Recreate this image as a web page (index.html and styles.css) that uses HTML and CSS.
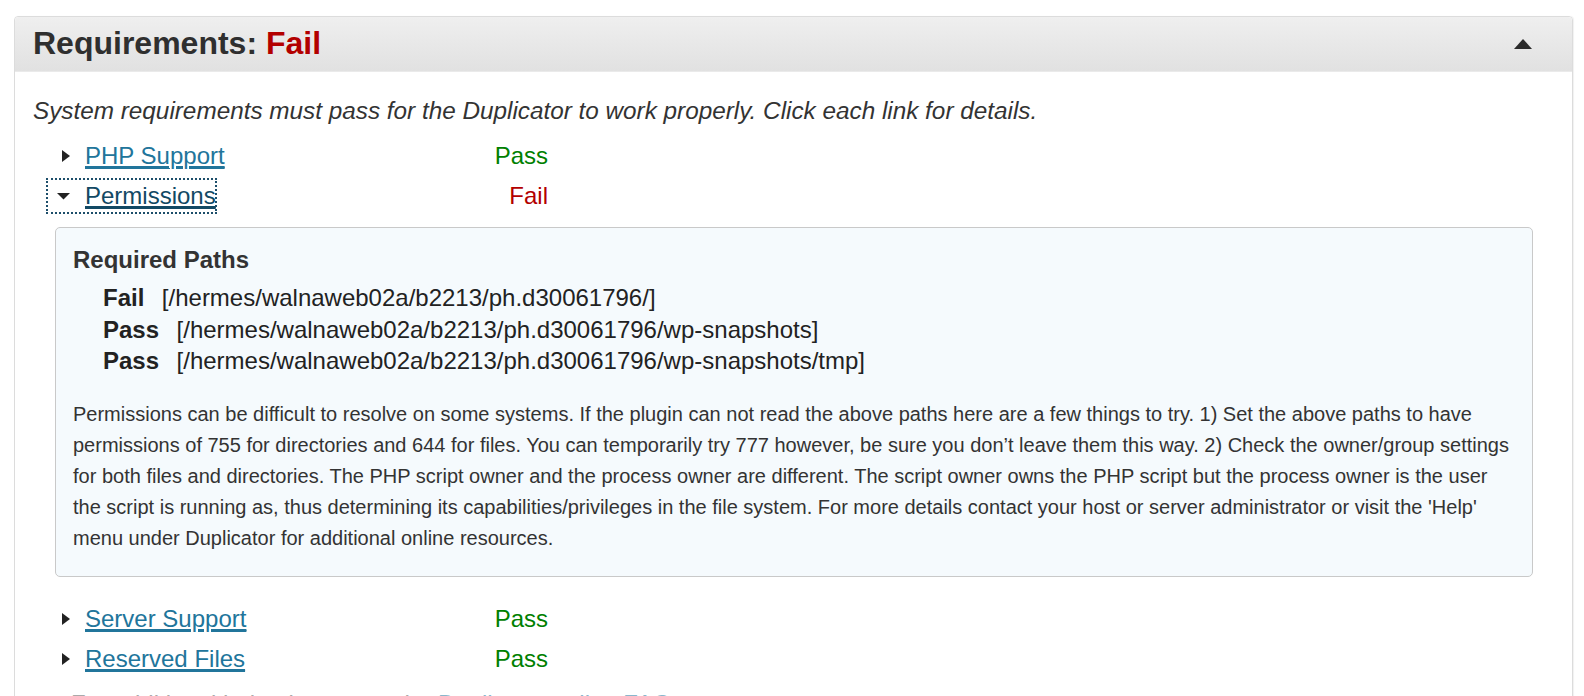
FILE: index.html
```html
<!DOCTYPE html>
<html lang="en">
<head>
    <meta charset="UTF-8">
    <meta name="viewport" content="width=device-width, initial-scale=1.0">
    <title>Duplicator - Requirements</title>
    <link rel="stylesheet" href="styles.css">
</head>
<body>

<div class="page">
    <div class="panel">
        <div class="panel-head">
            <h2 class="panel-title">Requirements: <span class="bad">Fail</span></h2>
            <span class="caret-up"></span>
        </div>

        <div class="panel-body">
            <p class="intro">System requirements must pass for the Duplicator to work properly. Click each link for details.</p>

            <div class="req-row">
                <a href="#" class="req-link">
                    <span class="arrow"><svg width="14" height="14" viewBox="0 0 14 14"><polygon points="5,1 13,7 5,13" fill="#222"/></svg></span>
                    <span class="req-name">PHP Support</span>
                </a>
                <span class="status pass">Pass</span>
            </div>

            <div class="req-row">
                <a href="#" class="req-link open">
                    <span class="arrow"><svg width="14" height="14" viewBox="0 0 14 14"><polygon points="0,4 13,4 6.5,10.5" fill="#222"/></svg></span>
                    <span class="req-name">Permissions</span>
                </a>
                <span class="status fail">Fail</span>
            </div>

            <div class="details">
                <h3>Required Paths</h3>
                <div class="path"><b>Fail</b>[/hermes/walnaweb02a/b2213/ph.d30061796/]</div>
                <div class="path"><b>Pass</b>[/hermes/walnaweb02a/b2213/ph.d30061796/wp-snapshots]</div>
                <div class="path"><b>Pass</b>[/hermes/walnaweb02a/b2213/ph.d30061796/wp-snapshots/tmp]</div>

                <p class="note">Permissions can be difficult to resolve on some systems. If the plugin can not read the above paths here are a few things to try. 1) Set the above paths to have permissions of 755 for directories and 644 for files. You can temporarily try 777 however, be sure you don’t leave them this way. 2) Check the owner/group settings for both files and directories. The PHP script owner and the process owner are different. The script owner owns the PHP script but the process owner is the user the script is running as, thus determining its capabilities/privileges in the file system. For more details contact your host or server administrator or visit the 'Help' menu under Duplicator for additional online resources.</p>
            </div>

            <div class="req-row">
                <a href="#" class="req-link">
                    <span class="arrow"><svg width="14" height="14" viewBox="0 0 14 14"><polygon points="5,1 13,7 5,13" fill="#222"/></svg></span>
                    <span class="req-name">Server Support</span>
                </a>
                <span class="status pass">Pass</span>
            </div>

            <div class="req-row">
                <a href="#" class="req-link">
                    <span class="arrow"><svg width="14" height="14" viewBox="0 0 14 14"><polygon points="5,1 13,7 5,13" fill="#222"/></svg></span>
                    <span class="req-name">Reserved Files</span>
                </a>
                <span class="status pass">Pass</span>
            </div>

            <p class="more">For additional help please see the <a href="#">Duplicator online FAQs</a></p>
        </div>
    </div>
</div>

</body>
</html>
```

FILE: styles.css
```css
html, body {
    margin: 0;
    padding: 0;
    background-color: #fff;
    overflow: hidden;
}

body {
    font-family: "Liberation Sans", Arial, sans-serif;
    color: #333;
}

.page {
    padding: 16px 11px 0 14px;
}

.panel {
    border: 1px solid #dcdcdc;
    border-radius: 4px 4px 0 0;
    box-shadow: 1px 0 1px rgba(0, 0, 0, 0.06);
}

.panel-head {
    height: 52px;
    padding: 0 40px 2px 18px;
    display: flex;
    align-items: center;
    justify-content: space-between;
    background: linear-gradient(to bottom, #efefef, #e1e1e1);
    border-bottom: 1px solid #eaeaea;
    border-radius: 4px 4px 0 0;
}

.panel-title {
    margin: 0;
    font-size: 32px;
    font-weight: bold;
    color: #2f2f2f;
}

.bad {
    color: #b30000;
}

.caret-up {
    width: 0;
    height: 0;
    border-left: 9px solid transparent;
    border-right: 9px solid transparent;
    border-bottom: 10px solid #2b2b2b;
    margin-top: 2px;
}

.panel-body {
    padding: 24px 18px 0 18px;
}

.intro {
    margin: 0 0 9.5px 0;
    font-size: 24.3px;
    font-style: italic;
    line-height: 30px;
}

.req-row {
    display: grid;
    grid-template-columns: 433px 68px;
    align-items: center;
    height: 40px;
    margin-left: 14px;
    font-size: 24px;
}

.req-link {
    display: inline-flex;
    align-items: center;
    justify-self: start;
    height: 34px;
    padding-left: 10px;
    color: #21759b;
}

.req-link .arrow {
    display: flex;
    width: 14px;
    height: 14px;
    margin-right: 14px;
}

.req-name {
    text-decoration: underline;
    text-decoration-thickness: 2px;
    text-underline-offset: 3px;
}

.req-link.open {
    color: #124964;
    outline: 2px dotted #1d4e6a;
    outline-offset: -1px;
}

.status {
    text-align: right;
}

.pass {
    color: #008000;
}

.fail {
    color: #b30000;
}

.details {
    margin: 11.5px 21px 22px 21.5px;
    padding: 16px 17.5px 22px 17.5px;
    background-color: #f5fafd;
    border: 1px solid #c9c9c9;
    border-radius: 5px;
}

.details h3 {
    margin: 0 0 7px 0;
    font-size: 24px;
    line-height: 31px;
    color: #333;
}

.path {
    padding-left: 30px;
    font-size: 24px;
    line-height: 31.5px;
    color: #222;
}

.path b {
    display: inline-block;
    margin-right: 17.5px;
}

.note {
    margin: 22.5px 0 0 0;
    font-size: 20px;
    line-height: 31.1px;
    color: #333;
}

.more {
    margin: 10px 0 0 38px;
    font-size: 24px;
    line-height: 30px;
    color: #aaa;
}

.more a {
    color: #8ab7cc;
}
```
